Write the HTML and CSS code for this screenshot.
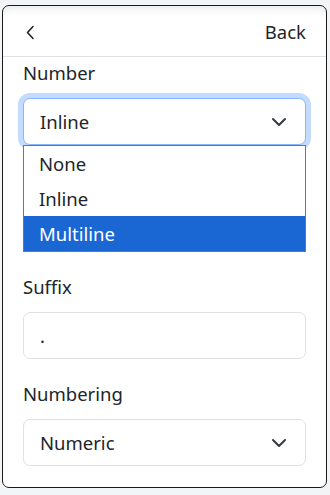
FILE: index.html
```html
<!DOCTYPE html>
<html lang="en">
<head>
<meta charset="utf-8">
<title>Number settings</title>
<link rel="stylesheet" href="styles.css">
</head>
<body>
<div class="card">
  <div class="card-header">
    <svg class="back-icon" width="10" height="15" viewBox="0 0 10 15" aria-hidden="true">
      <path d="M8 1.5 L2.5 7.5 L8 13.5" fill="none" stroke="#212529" stroke-width="1.6" stroke-linecap="round" stroke-linejoin="round"/>
    </svg>
    <span class="back-label">Back</span>
  </div>
  <div class="card-body">
    <div class="field">
      <div class="label">Number</div>
      <div class="select-wrap">
        <div class="control select focused">
          <span>Inline</span>
          <svg class="chev" width="16" height="10" viewBox="0 0 16 10" aria-hidden="true"><path d="M2 2 L8 8 L14 2" fill="none" stroke="#343a40" stroke-width="2" stroke-linecap="round" stroke-linejoin="round"/></svg>
        </div>
        <ul class="popup">
          <li>None</li>
          <li>Inline</li>
          <li class="active">Multiline</li>
        </ul>
      </div>
    </div>
    <div class="field covered" aria-hidden="true"></div>
    <div class="field">
      <div class="label">Suffix</div>
      <div class="control input"><span>.</span></div>
    </div>
    <div class="field">
      <div class="label">Numbering</div>
      <div class="control select">
        <span>Numeric</span>
        <svg class="chev" width="16" height="10" viewBox="0 0 16 10" aria-hidden="true"><path d="M2 2 L8 8 L14 2" fill="none" stroke="#343a40" stroke-width="2" stroke-linecap="round" stroke-linejoin="round"/></svg>
      </div>
    </div>
  </div>
</div>
</body>
</html>
```

FILE: styles.css
```css
* { box-sizing: border-box; }
html, body { margin: 0; padding: 0; }
body {
  background: #f3f4f6;
  font-family: "Noto Sans", "Open Sans", sans-serif;
  font-size: 18.5px;
  color: #212529;
  padding: 5px 3px 7px 2px;
}
.card {
  background: #fff;
  border: 1px solid #1b1b1b;
  border-radius: 7px;
  box-shadow: inset 0 8px 10px -6px rgba(0,0,0,0.10);
}
.card-header {
  height: 51px;
  border-bottom: 1px solid #dee2e6;
  display: flex;
  align-items: center;
  justify-content: space-between;
  padding: 2px 20px 0 22px;
}
.back-icon { display: block; }
.back-label { line-height: 30px; }
.card-body {
  padding: 0 20px 21px;
}
.field + .field { margin-top: 19px; }
.field.covered { height: 88px; }
.label {
  line-height: 30px;
  padding-top: 1px;
  margin-bottom: 10px;
}
.select-wrap { position: relative; }
.control {
  height: 47px;
  border: 1px solid #dee2e6;
  border-radius: 7px;
  background: #fff;
  display: flex;
  align-items: center;
  justify-content: space-between;
  padding: 0 18px 0 16px;
  line-height: 30px;
}
.control.focused {
  border-color: #86b7fe;
  box-shadow: 0 0 0 5px #c2dbfe;
}
.chev { display: block; }
.popup {
  position: absolute;
  left: 0;
  right: 0;
  top: 100%;
  margin: 0;
  padding: 0;
  list-style: none;
  background: #fff;
  border: 1px solid #767676;
  z-index: 2;
}
.popup li {
  height: 35px;
  line-height: 35px;
  padding-left: 15px;
}
.popup li.active {
  background: #1a67d3;
  color: #fff;
}
```
